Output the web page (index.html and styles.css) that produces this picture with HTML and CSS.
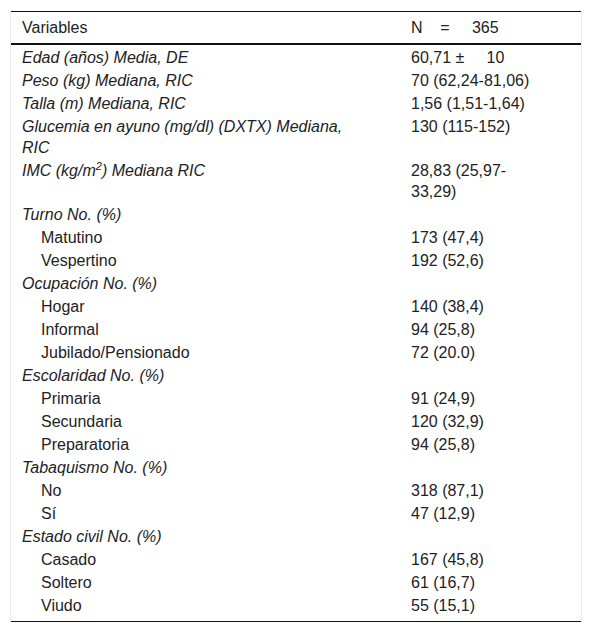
FILE: index.html
```html
<!DOCTYPE html>
<html lang="es">
<head>
<meta charset="utf-8">
<title>Tabla</title>
<link rel="stylesheet" href="styles.css">
</head>
<body>
<div class="frame">
<table class="data">
<thead>
<tr><th class="c1">Variables</th><th class="c2">N&nbsp;&nbsp;&nbsp;&nbsp;=&nbsp;&nbsp;&nbsp;&nbsp; 365</th></tr>
</thead>
<tbody>
<tr><td class="c1 grp">Edad (años) Media, DE</td><td class="c2">60,71 ±&nbsp;&nbsp;&nbsp;&nbsp; 10</td></tr>
<tr><td class="c1 grp">Peso (kg) Mediana, RIC</td><td class="c2">70 (62,24-81,06)</td></tr>
<tr><td class="c1 grp">Talla (m) Mediana, RIC</td><td class="c2">1,56 (1,51-1,64)</td></tr>
<tr><td class="c1 grp">Glucemia en ayuno (mg/dl) (DXTX) Mediana, RIC</td><td class="c2">130 (115-152)</td></tr>
<tr><td class="c1 grp">IMC (kg/m<sup>2</sup>) Mediana RIC</td><td class="c2">28,83 (25,97-33,29)</td></tr>
<tr><td class="c1 grp">Turno No. (%)</td><td class="c2"></td></tr>
<tr><td class="c1 sub">Matutino</td><td class="c2">173 (47,4)</td></tr>
<tr><td class="c1 sub">Vespertino</td><td class="c2">192 (52,6)</td></tr>
<tr><td class="c1 grp">Ocupación No. (%)</td><td class="c2"></td></tr>
<tr><td class="c1 sub">Hogar</td><td class="c2">140 (38,4)</td></tr>
<tr><td class="c1 sub">Informal</td><td class="c2">94 (25,8)</td></tr>
<tr><td class="c1 sub">Jubilado/Pensionado</td><td class="c2">72 (20.0)</td></tr>
<tr><td class="c1 grp">Escolaridad No. (%)</td><td class="c2"></td></tr>
<tr><td class="c1 sub">Primaria</td><td class="c2">91 (24,9)</td></tr>
<tr><td class="c1 sub">Secundaria</td><td class="c2">120 (32,9)</td></tr>
<tr><td class="c1 sub">Preparatoria</td><td class="c2">94 (25,8)</td></tr>
<tr><td class="c1 grp">Tabaquismo No. (%)</td><td class="c2"></td></tr>
<tr><td class="c1 sub">No</td><td class="c2">318 (87,1)</td></tr>
<tr><td class="c1 sub">Sí</td><td class="c2">47 (12,9)</td></tr>
<tr><td class="c1 grp">Estado civil No. (%)</td><td class="c2"></td></tr>
<tr><td class="c1 sub">Casado</td><td class="c2">167 (45,8)</td></tr>
<tr><td class="c1 sub">Soltero</td><td class="c2">61 (16,7)</td></tr>
<tr class="last"><td class="c1 sub">Viudo</td><td class="c2">55 (15,1)</td></tr>
</tbody>
</table>
</div>
</body>
</html>
```

FILE: styles.css
```css
html, body {
  margin: 0;
  padding: 0;
  background: #ffffff;
}
body {
  padding: 11px 10px 0 10px;
  font-family: "Liberation Sans", Arial, sans-serif;
  font-size: 16px;
  color: #222222;
}
.frame {
  width: 570px;
  border-left: 1px solid #e8e8e8;
  border-right: 1px solid #e8e8e8;
}
.data {
  width: 570px;
  border-collapse: collapse;
  table-layout: fixed;
  border-top: 1px solid #111111;
  border-bottom: 1px solid #111111;
}
.data th, .data td {
  text-align: left;
  vertical-align: top;
  line-height: 21px;
  padding: 2px 0 0 0;
  font-weight: normal;
}
.data thead th {
  line-height: 20px;
  padding-top: 6px;
  padding-bottom: 5px;
  border-bottom: 2px solid #111111;
}
.c1 {
  width: 335px;
  padding-left: 11px !important;
  padding-right: 43px !important;
}
.c2 {
  padding-left: 11px !important;
  padding-right: 39px !important;
}
.grp {
  font-style: italic;
}
.sub {
  padding-left: 30px !important;
}
.data sup {
  font-size: 11px;
  line-height: 0;
  vertical-align: 6px;
}
.last td {
  padding-bottom: 5px;
}
```
